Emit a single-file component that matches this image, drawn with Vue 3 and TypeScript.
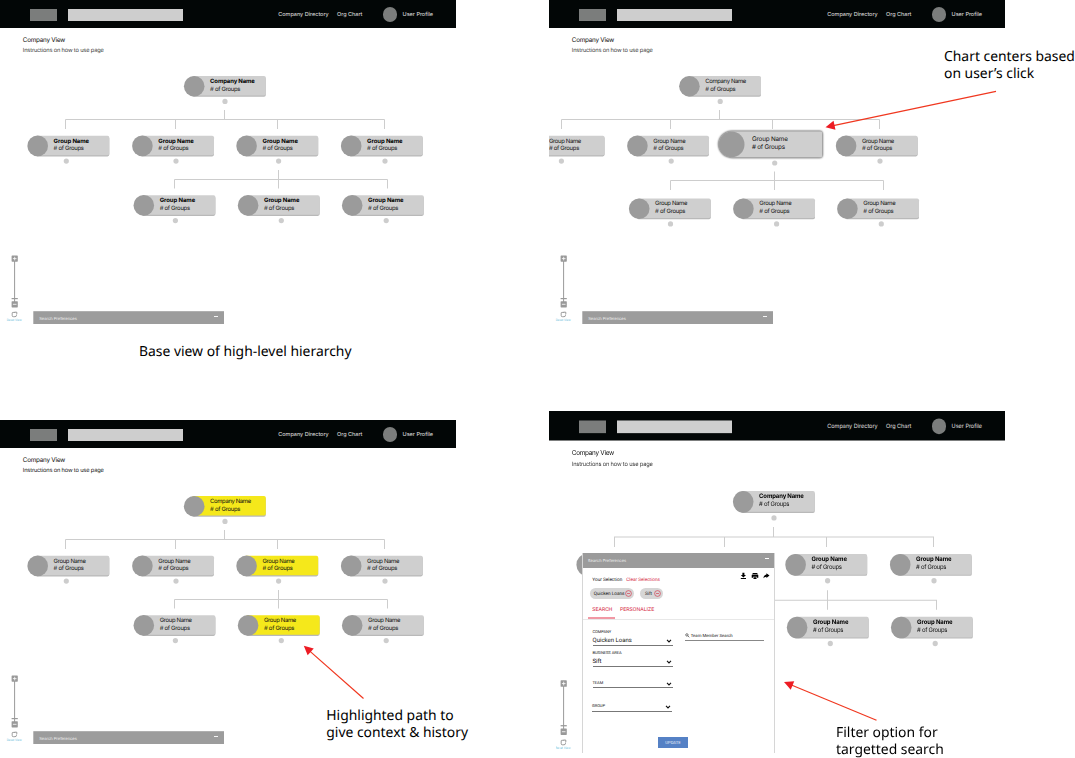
<script setup lang="ts">
interface OrgNode {
  x: number
  y: number
  dot: number
  company?: boolean
  bold?: boolean
  lit?: boolean
  big?: boolean
  bare?: boolean
}

interface Frame {
  id: string
  nodes: OrgNode[]
  wires: string
  strongIntro?: boolean
}

const baseWires =
  'M224.5 110V119.5M65.5 129V119.5H384.5V129M175.5 119.5V129M277.5 119.5V129M278.5 170V188.5M174.5 188.5V179.5H387.5V188.5'

function baseNodes(bold: boolean, lit: number[] = []): OrgNode[] {
  const spots = [
    [183.8, 76, 225],
    [27.3, 135.7, 66.3],
    [132, 135.7, 176],
    [236.2, 135.7, 278.6],
    [340.8, 135.7, 385],
    [133.4, 195.2, 175.4],
    [237.7, 195.2, 281.3],
    [341.8, 195.2, 386.2],
  ]
  return spots.map(([x, y, dot], i) => ({ x, y, dot, bold, company: i === 0, lit: lit.includes(i) }))
}

const frames: Frame[] = [
  { id: 'base', nodes: baseNodes(true), wires: baseWires },
  {
    id: 'focus',
    wires:
      'M170.5 110V119.5M12.5 129V119.5H330.5V129M121.5 119.5V129M223.5 119.5V129M225.5 171.5V190M121.5 190V180.5H334.5V190',
    nodes: [
      { x: 130, y: 76, dot: 171.2, company: true },
      { x: -26.4, y: 135.7, dot: 12.4 },
      { x: 78, y: 135.7, dot: 122.2 },
      { x: 169.3, y: 131.3, dot: 225.7, big: true },
      { x: 286.7, y: 135.7, dot: 331 },
      { x: 79.8, y: 198.5, dot: 121.5 },
      { x: 184, y: 198.5, dot: 227.6 },
      { x: 288, y: 198.5, dot: 332.3 },
    ],
  },
  { id: 'path', nodes: baseNodes(false, [0, 3, 6]), wires: baseWires, strongIntro: true },
  {
    id: 'filter',
    // Nodes under the open panel are dropped; the first one only peeks out on the left.
    nodes: baseNodes(true)
      .map((n, i) => ({ ...n, bare: i === 1 }))
      .filter((_, i) => i !== 2 && i !== 5),
    wires: baseWires,
  },
]

const arrows = [
  { tip: [825.5, 127.2], tail: [996, 91.3] },
  { tip: [303.8, 645.8], tail: [363.5, 698.5] },
  { tip: [784, 682], tail: [876.5, 720.3] },
].map(({ tip, tail }) => {
  const dx = tail[0] - tip[0]
  const dy = tail[1] - tip[1]
  return {
    transform: `translate(${tip[0]} ${tip[1]}) rotate(${(Math.atan2(dy, dx) * 180) / Math.PI})`,
    length: Math.hypot(dx, dy),
  }
})

const captions = [
  { id: 'c-base', lines: ['Base view of high-level hierarchy'] },
  { id: 'c-focus', lines: ['Chart centers based', 'on user’s click'] },
  { id: 'c-path', lines: ['Highlighted path to', 'give context & history'] },
  { id: 'c-filter', lines: ['Filter option for', 'targetted search'] },
]

const fields = [
  { label: 'COMPANY', value: 'Quicken Loans', cls: 'f-company' },
  { label: 'BUSINESS AREA', value: 'Sift', cls: 'f-area' },
  { label: 'TEAM', value: '', cls: 'f-team' },
  { label: 'GROUP', value: '', cls: 'f-group' },
]
</script>

<template>
  <main class="board">
    <section v-for="f in frames" :key="f.id" class="frame" :class="f.id">
      <header class="topbar">
        <span class="logo"></span>
        <span class="searchbox"></span>
        <nav>
          <span class="n1">Company Directory</span>
          <span class="n2">Org Chart</span>
          <span class="avatar"></span>
          <span class="n3">User Profile</span>
        </nav>
      </header>
      <svg class="chart" width="456" height="296" viewBox="0 28 456 296">
        <text x="22.8" y="42.1" font-size="6.4" textLength="42.5" class="t">Company View</text>
        <text x="22.8" y="52.1" font-size="5.7" textLength="81" class="t" :class="{ soft: !f.strongIntro }">Instructions on how to use page</text>
        <path :d="f.wires" class="wire" />
        <g v-for="(n, i) in f.nodes" :key="i">
          <g v-if="n.big">
            <path :d="`M${n.x + 13.4} ${n.y}H${n.x + 102}q2 0 2 2V${n.y + 24.1}q0 2 -2 2H${n.x + 13.4}a13.05 13.05 0 0 1 0 -26.1z`" class="card glow" />
            <circle :cx="n.x + 13.3" :cy="n.y + 13.1" r="12.9" class="face" />
            <text :x="n.x + 33.7" :y="n.y + 9.5" font-size="6.3" textLength="35.8" class="t">Group Name</text>
            <text :x="n.x + 33.7" :y="n.y + 17.7" font-size="6.3" textLength="33" class="t">&#35; of Groups</text>
            <circle :cx="n.dot" :cy="n.y + 31.7" r="2.6" class="dot" />
          </g>
          <g v-else>
            <rect :x="n.x + 8" :y="n.y + 1.1" width="74" height="19.6" rx="1.8" class="shade" />
            <rect :x="n.x + 8" :y="n.y" width="74" height="19.6" rx="1.8" class="card" :class="{ lit: n.lit }" />
            <circle :cx="n.x + 10.4" :cy="n.y + 10.2" r="10.3" class="face" />
            <template v-if="!n.bare">
              <text :x="n.x + 26.3" :y="n.y + 6.9" font-size="5.95" :textLength="(n.company ? 41 : 32.3) + (n.bold ? (n.company ? 3.8 : 3.2) : 0)" class="t" :class="{ strong: n.bold }">{{ n.company ? 'Company Name' : 'Group Name' }}</text>
              <text :x="n.x + 26.3" :y="n.y + 14.6" font-size="5.95" textLength="30.4" class="t">&#35; of Groups</text>
            </template>
            <circle :cx="n.dot" :cy="n.y + 25.4" r="2.6" class="dot" />
          </g>
        </g>
        <g class="zoomer">
          <rect x="14.1" y="260" width="1" height="42" />
          <rect x="11.6" y="255.5" width="6.2" height="6.2" rx=".6" />
          <rect x="11.6" y="298" width="6.2" height="1.2" />
          <rect x="11.6" y="301.2" width="6.2" height="6.2" rx=".6" />
          <path d="M12.9 258.6H16.5M14.7 256.8V260.4M12.9 304.3H16.5" stroke="#fff" stroke-width=".8" />
          <path d="M15.2 312.4H12.9Q12.2 312.4 12.2 313.1V315.6Q12.2 316.7 13.3 316.7H15Q16.5 316.7 16.5 315.2V314.6M14.6 312.2H16.8V314.2" fill="none" stroke="#777" stroke-width=".7" />
          <text x="6.8" y="320.6" font-size="3" textLength="14.8" class="reset">Reset View</text>
        </g>
        <g v-if="f.id !== 'filter'">
          <rect x="33.3" y="311.2" width="190.7" height="12.8" fill="#9c9c9c" />
          <text x="39.2" y="319.8" font-size="4.1" textLength="37.7" class="prefs">Search Preferences</text>
          <path d="M214 316.5H218" stroke="#fff" stroke-width=".9" />
        </g>
      </svg>
    </section>

    <aside class="panel">
      <div class="panel-head">
        <span>Search Preferences</span>
        <i></i>
      </div>
      <div class="selection">
        <span class="yours">Your Selection</span>
        <span class="clear">Clear Selections</span>
        <svg class="actions" width="30" height="8" viewBox="0 0 30 8">
          <path d="M2.4 .8H4.4V3H6L3.4 5.5.8 3H2.4zM.8 6H6V6.9H.8z" />
          <path d="M12.6 .9H17.4V2.1H12.6zM12.3 2.6H17.7Q18.3 2.6 18.3 3.3V5.7H17V4.7H13V5.7H11.7V3.3Q11.7 2.6 12.3 2.6zM13.5 5.2H16.5V7.1H13.5z" />
          <path d="M26.4 1.2L29.5 3.6 26.4 6V4.7Q24.3 4.7 23.4 6.3 23.7 3 26.4 2.6z" />
        </svg>
      </div>
      <div class="chips">
        <span v-for="c in ['Quicken Loans', 'Sift']" :key="c" class="chip" :class="{ short: c === 'Sift' }">
          <b>{{ c }}</b>
          <svg width="7" height="7" viewBox="0 0 7 7"><circle cx="3.5" cy="3.5" r="2.9" /><path d="M2 3.5H5" /></svg>
        </span>
      </div>
      <div class="tabs">
        <span class="tab active">SEARCH</span>
        <span class="tab">PERSONALIZE</span>
      </div>
      <div class="form">
        <div class="column">
          <div v-for="x in fields" :key="x.label" class="field" :class="x.cls">
            <label>{{ x.label }}</label>
            <strong v-if="x.value">{{ x.value }}</strong>
            <svg class="chev" width="6" height="4" viewBox="0 0 6 4"><path d="M1 .8L3 2.9 5 .8" /></svg>
          </div>
        </div>
        <div class="member">
          <svg width="5" height="5" viewBox="0 0 5 5"><circle cx="1.9" cy="1.9" r="1.2" /><path d="M2.8 2.8L4.3 4.3" /></svg>
          <span>Team Member Search</span>
        </div>
      </div>
      <div class="update">UPDATE</div>
    </aside>

    <p v-for="c in captions" :key="c.id" class="caption" :class="c.id">
      <span v-for="l in c.lines" :key="l">{{ l }}</span>
    </p>

    <svg class="arrows" width="1075" height="758" viewBox="0 0 1075 758">
      <g v-for="(a, i) in arrows" :key="i" :transform="a.transform">
        <path :d="`M8 0H${a.length}`" stroke="#f0371f" stroke-width="1.2" />
        <path d="M0 0L9.2 -4.6V4.6z" fill="#ed1c24" />
      </g>
    </svg>
  </main>
</template>

<style>
html,
body {
  margin: 0;
  background: #fff;
}
</style>

<style scoped>
.board {
  position: relative;
  width: 1075px;
  height: 758px;
  overflow: hidden;
  background: #fff;
  font-family: Inter, "Liberation Sans", sans-serif;
  text-rendering: geometricPrecision;
}
.frame {
  position: absolute;
  width: 456px;
  height: 324px;
  overflow: hidden;
}
.base { left: 0; top: 0; }
.focus { left: 549px; top: 0; }
.path { left: 0; top: 420px; }
.filter {
  left: 549px;
  top: 411px;
  transform: scaleY(1.054);
  transform-origin: 0 0;
}
.topbar {
  box-sizing: border-box;
  display: flex;
  align-items: center;
  height: 28.4px;
  padding: 1px 0 0 30px;
  background: #020606;
}
.logo {
  width: 27px;
  height: 12px;
  background: #7b7d7c;
}
.searchbox {
  width: 115px;
  height: 12px;
  margin-left: 11px;
  background: #cecece;
}
nav {
  display: flex;
  align-items: center;
  margin-left: 95.3px;
  color: #e2e2e2;
  font-size: 5.5px;
  line-height: 8px;
  white-space: nowrap;
}
.n1 { width: 58.7px; }
.n2 { width: 45.7px; }
.avatar {
  width: 14.8px;
  height: 14.8px;
  border-radius: 50%;
  background: #7b7d7c;
}
.n3 { margin-left: 5.1px; }
.chart {
  display: block;
  margin-top: -.4px;
}
.t { fill: #111; }
.soft { fill: #3a3a3a; }
.strong { font-weight: 700; fill: #000; }
.wire {
  fill: none;
  stroke: #cdcdcd;
  stroke-width: 1;
}
.card { fill: #cfcfcf; }
.lit { fill: #f5e81b; }
.shade { fill: #b9b9b9; }
.face { fill: #9b9b9b; }
.dot { fill: #cdcdcd; }
.glow { filter: drop-shadow(0 .9px .9px #000); }
.zoomer rect { fill: #999; }
.reset { fill: #79c4de; }
.prefs { fill: #f0f0f0; }

.panel {
  position: absolute;
  left: 582px;
  top: 552.5px;
  box-sizing: border-box;
  width: 193px;
  height: 200.5px;
  border: solid #d6d6d6;
  border-width: 0 1px;
  background: #fff;
  color: #111;
  font-family: Roboto, sans-serif;
  overflow: hidden;
  white-space: nowrap;
}
.panel-head {
  display: flex;
  justify-content: space-between;
  height: 15px;
  margin: 0 -1px;
  padding: 0 6px;
  background: #9b9b9b;
  color: #f0f0f0;
  font: 4px/16px Inter, sans-serif;
  letter-spacing: .05px;
}
.panel-head i {
  width: 4px;
  height: 1px;
  margin-top: 5.5px;
  background: #fff;
}
.selection {
  display: flex;
  height: 20.5px;
  padding-left: 9.3px;
  font-size: 4.7px;
  line-height: 25.4px;
}
.yours { width: 34px; }
.clear { width: 113.5px; color: #d5283f; }
.actions { margin-top: 4.5px; }
.chips {
  display: flex;
  gap: 6px;
  padding-left: 6.7px;
}
.chip {
  box-sizing: border-box;
  display: flex;
  align-items: center;
  justify-content: space-between;
  width: 44.3px;
  height: 11.3px;
  padding: 0 2.5px 0 4.1px;
  border-radius: 6px;
  background: #d6d6d6;
  font-size: 4.7px;
}
.chip b { font-weight: 400; padding-top: 1px; }
.short { width: 23.5px; padding-left: 5px; }
.chip svg,
.chev,
.member svg {
  flex-shrink: 0;
  fill: none;
  stroke: #d5283f;
  stroke-width: .6;
}
.tabs {
  box-sizing: border-box;
  display: flex;
  height: 20.5px;
  padding-left: 5px;
  border-bottom: 1px solid #e8e8e8;
  color: #d5283f;
  font-size: 5.3px;
  line-height: 22.6px;
}
.tab { height: 20px; }
.tab.active {
  box-sizing: border-box;
  width: 27px;
  margin-right: 5px;
  padding-left: 4.3px;
  border-bottom: 2px solid #f198a4;
}
.form {
  display: flex;
  padding-left: 9.5px;
}
.column { width: 80px; }
.field {
  position: relative;
  box-sizing: border-box;
  display: flex;
  flex-direction: column;
  justify-content: flex-end;
  border-bottom: 1px solid #777;
}
.field label {
  font-size: 4px;
  line-height: 6px;
  letter-spacing: -.03px;
}
.field strong {
  font-size: 6px;
  font-weight: 400;
  line-height: 9px;
  padding-top: 1.2px;
  margin-bottom: -.4px;
}
.f-company { height: 25.9px; }
.f-area { height: 21.3px; }
.f-team { height: 21.2px; }
.f-group { height: 23.6px; left: -.5px; }
.f-team label,
.f-group label { margin-bottom: 1.6px; }
.chev {
  position: absolute;
  right: 1px;
  bottom: 1.6px;
  stroke: #111;
  stroke-width: 1.1;
}
.member {
  box-sizing: border-box;
  display: flex;
  align-items: center;
  gap: 1.2px;
  width: 79.5px;
  height: 10px;
  margin: 11px 0 0 12px;
  border-bottom: 1px solid #888;
  font-size: 4.3px;
}
.member svg { stroke: #222; }
.member span { padding-top: 1.6px; }
.update {
  width: 30px;
  height: 11px;
  margin: 25px 0 0 75px;
  background: #5581c5;
  color: #e4ebf7;
  font-size: 4.2px;
  line-height: 13px;
  text-align: center;
}
.caption {
  position: absolute;
  margin: 0;
  color: #000;
  font: 13.9px/17px "Noto Sans", sans-serif;
  white-space: nowrap;
}
.caption span { display: block; }
.c-base { left: 139px; top: 343px; }
.c-focus { left: 944px; top: 48px; }
.c-path { left: 326.3px; top: 707px; }
.c-filter { left: 836px; top: 724px; }
.arrows {
  position: absolute;
  left: 0;
  top: 0;
}
</style>
